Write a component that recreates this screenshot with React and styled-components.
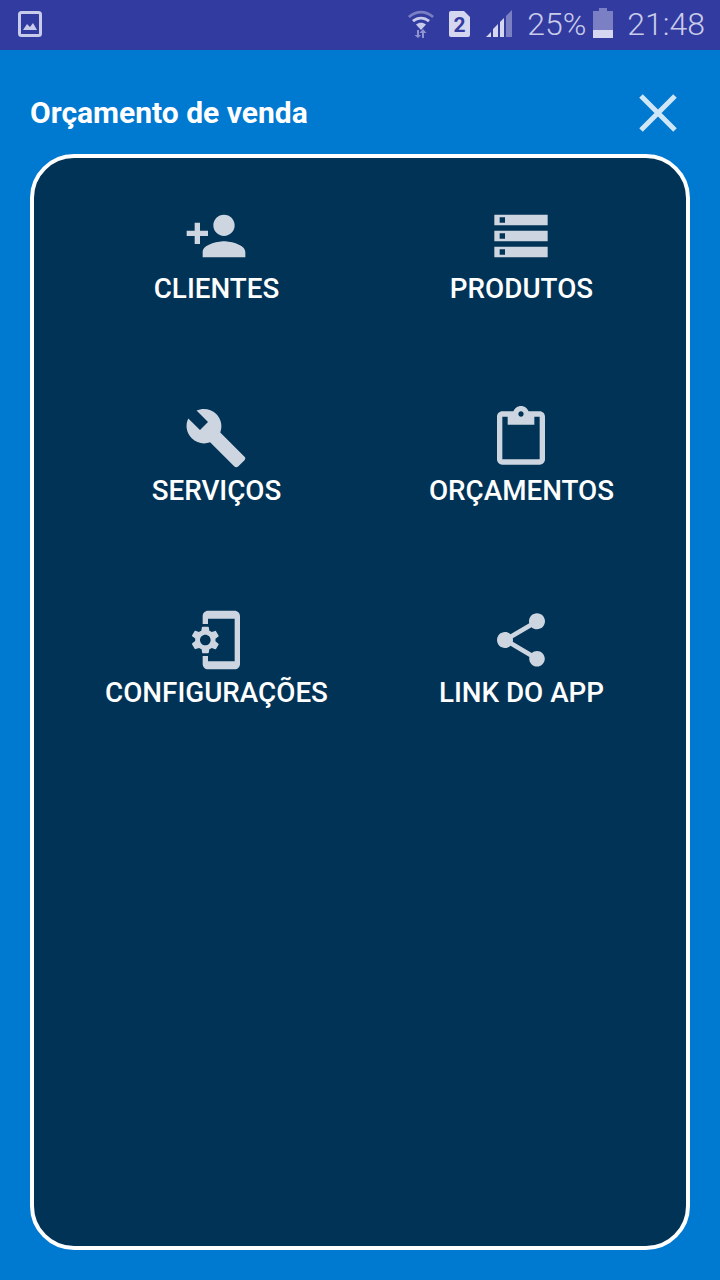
import React from "react";
import styled, { createGlobalStyle } from "styled-components";

const GlobalStyle = createGlobalStyle`
  html, body {
    margin: 0;
    padding: 0;
    background: #0079d1;
  }
  * {
    box-sizing: border-box;
  }
`;

const Screen = styled.div`
  width: 720px;
  height: 1280px;
  display: flex;
  flex-direction: column;
  background: #0079d1;
  font-family: Roboto, "Liberation Sans", sans-serif;
  overflow: hidden;
`;

const StatusBar = styled.div`
  height: 50px;
  flex: none;
  display: flex;
  align-items: center;
  padding: 0 15px 2px 18px;
  background: #323b9f;
  color: #c9cbea;
`;

const StatusRight = styled.div`
  margin-left: auto;
  display: flex;
  align-items: center;
`;

const StatusText = styled.span`
  font-size: 32px;
  font-weight: 300;
  line-height: 48px;
  margin-left: ${(p) => p.$ml || 0}px;
`;

const StatusIcon = styled.svg`
  display: block;
  flex: none;
  margin-left: ${(p) => p.$ml || 0}px;
  margin-bottom: ${(p) => p.$mb || 0}px;
`;

const SimNumber = styled.text`
  font-family: Roboto, "Liberation Sans", sans-serif;
  font-size: 21px;
  font-weight: 700;
  fill: #323b9f;
`;

const Header = styled.div`
  height: 104px;
  flex: none;
  display: flex;
  align-items: center;
  justify-content: space-between;
  padding: 32px 43px 10px 30px;
`;

const Title = styled.h1`
  margin: 0;
  color: #fff;
  font-size: 30px;
  font-weight: 700;
  line-height: 36px;
`;

const CloseIcon = styled.svg`
  display: block;
  color: #cfe6f7;
`;

const Panel = styled.div`
  flex: 1;
  margin: 0 30px 30px;
  border: 4px solid #fff;
  border-radius: 44px;
  background: #013357;
  padding: 46px 12px 0 30px;
`;

const Grid = styled.div`
  display: grid;
  grid-template-columns: 305px 305px;
  grid-auto-rows: 202px;
`;

const Item = styled.div`
  display: flex;
  flex-direction: column;
  align-items: center;
`;

const ItemIcon = styled.svg`
  display: block;
  width: 64px;
  height: 64px;
  margin-right: 2px;
  fill: #cdd6e0;
`;

const ItemLabel = styled.span`
  margin-top: 5px;
  color: #fff;
  font-size: 27.8px;
  font-weight: 500;
  line-height: 32px;
  white-space: nowrap;
`;

const items = [
  {
    label: "CLIENTES",
    d: "M15 12c2.21 0 4-1.79 4-4s-1.79-4-4-4-4 1.79-4 4 1.79 4 4 4zm-9-2V7H4v3H1v2h3v3h2v-3h3v-2H6zm9 4c-2.67 0-8 1.34-8 4v2h16v-2c0-2.66-5.33-4-8-4z",
  },
  {
    label: "PRODUTOS",
    d: "M2 20h20v-4H2v4zm2-3h2v2H4v-2zM2 4v4h20V4H2zm4 3H4V5h2v2zm-4 7h20v-4H2v4zm2-3h2v2H4v-2z",
  },
  {
    label: "SERVIÇOS",
    d: "M22.7 19l-9.1-9.1c.9-2.3.4-5-1.5-6.9-2-2-5-2.4-7.4-1.3L9 6 6 9 1.6 4.7C.4 7.1.9 10.1 2.9 12.1c1.9 1.9 4.6 2.4 6.9 1.5l9.1 9.1c.4.4 1 .4 1.4 0l2.3-2.3c.5-.4.5-1.1.1-1.4z",
  },
  {
    label: "ORÇAMENTOS",
    d: "M19 2h-4.18C14.4.84 13.3 0 12 0c-1.3 0-2.4.84-2.82 2H5c-1.1 0-2 .9-2 2v16c0 1.1.9 2 2 2h14c1.1 0 2-.9 2-2V4c0-1.1-.9-2-2-2zm-7 0c.55 0 1 .45 1 1s-.45 1-1 1-1-.45-1-1 .45-1 1-1zm7 18H5V4h2v3h10V4h2v16z",
  },
  {
    label: "CONFIGURAÇÕES",
    d: "M11.8 12.5v-1l1.1-.8c.1-.1.1-.2.1-.3l-1-1.7c-.1-.1-.2-.2-.3-.1l-1.3.4c-.3-.2-.6-.4-.9-.5l-.2-1.3c0-.1-.1-.2-.3-.2H7c-.1 0-.2.1-.3.2l-.2 1.3c-.3.1-.6.3-.9.5l-1.3-.5c-.1 0-.2 0-.3.1l-1 1.7c-.1.1 0 .2.1.3l1.1.8v1l-1.1.8c-.1.2-.1.3-.1.4l1 1.7c.1.1.2.2.3.1l1.4-.4c.3.2.6.4.9.5l.2 1.3c0 .1.1.2.2.2h2c.1 0 .2-.1.3-.2l.2-1.3c.3-.1.6-.3.9-.5l1.3.5c.1 0 .2 0 .3-.1l1-1.7c.1-.1 0-.2-.1-.3l-1.1-.9zM8 14c-1.1 0-2-.9-2-2s.9-2 2-2 2 .9 2 2-.9 2-2 2zM19 1H9c-1.1 0-2 .9-2 2v3h2V4h10v16H9v-2H7v3c0 1.1.9 2 2 2h10c1.1 0 2-.9 2-2V3c0-1.1-.9-2-2-2z",
  },
  {
    label: "LINK DO APP",
    d: "M18 16.08c-.76 0-1.44.3-1.96.77L8.91 12.7c.05-.23.09-.46.09-.7s-.04-.47-.09-.7l7.05-4.11c.54.5 1.25.81 2.04.81 1.66 0 3-1.34 3-3s-1.34-3-3-3-3 1.34-3 3c0 .24.04.47.09.7L8.04 9.81C7.5 9.31 6.79 9 6 9c-1.66 0-3 1.34-3 3s1.34 3 3 3c.79 0 1.5-.31 2.04-.81l7.12 4.16c-.05.21-.08.43-.08.65 0 1.61 1.31 2.92 2.92 2.92 1.61 0 2.92-1.31 2.92-2.92s-1.31-2.92-2.92-2.92z",
  },
];

function App() {
  return (
    <Screen>
      <GlobalStyle />
      <StatusBar>
        <StatusIcon width="24" height="26" viewBox="0 0 24 26">
          <rect x="1.5" y="1.5" width="21" height="23" rx="2" fill="none" stroke="#c9cbea" strokeWidth="3" />
          <path d="M5 19l4-6 3 3 3-4 4 7z" fill="#c9cbea" />
        </StatusIcon>
        <StatusRight>
          <StatusIcon width="28" height="28" viewBox="0 0 28 28">
            <path d="M1 6C9-1 19-1 27 6l-1.800 2C18.500 2 9.500 2 2.800 8z" fill="#7b7fc4" />
            <path d="M5 10c5.500-4.500 12.500-4.500 18 0l-2 2.200c-4.500-3.500-9.500-3.500-14 0z" fill="#c9cbea" />
            <path d="M9 14.500c3-2.500 7-2.500 10 0L14 20z" fill="#c9cbea" />
            <path d="M10 20v5H7.500l3.500 3 3-3h-2v-5zM17 28v-5h2.500L16 19l-3.500 4H15v5z" fill="#8f93cf" />
          </StatusIcon>
          <StatusIcon $ml={14} width="21" height="26" viewBox="0 0 21 26">
            <path d="M2 0h13l6 6v18a2 2 0 0 1-2 2H2a2 2 0 0 1-2-2V2a2 2 0 0 1 2-2z" fill="#d5d7f0" />
            <SimNumber x="10.500" y="20.500" textAnchor="middle">2</SimNumber>
          </StatusIcon>
          <StatusIcon $ml={16} width="26" height="28" viewBox="0 0 26 28">
            <path d="M0 27l5-5v5zM7 27v-8l5-5v13zM14 27V12l4-4v19z" fill="#d5d7f0" />
            <path d="M20 27V6l6-6v27z" fill="#7b7fc4" />
          </StatusIcon>
          <StatusText $ml={15}>25%</StatusText>
          <StatusIcon $ml={7} $mb={2} width="20" height="30" viewBox="0 0 20 30">
            <path d="M6 0h8v3h6v27H0V3h6z" fill="#7b7fc4" />
            <rect x="0" y="22" width="20" height="8" fill="#d5d7f0" />
          </StatusIcon>
          <StatusText $ml={14}>21:48</StatusText>
        </StatusRight>
      </StatusBar>
      <Header>
        <Title>Orçamento de venda</Title>
        <CloseIcon width="38" height="38" viewBox="0 0 38 38">
          <path d="M2 2l34 34M36 2L2 36" stroke="currentColor" strokeWidth="5" fill="none" />
        </CloseIcon>
      </Header>
      <Panel>
        <Grid>
          {items.map((item) => (
            <Item key={item.label}>
              <ItemIcon viewBox="0 0 24 24">
                <path d={item.d} />
              </ItemIcon>
              <ItemLabel>{item.label}</ItemLabel>
            </Item>
          ))}
        </Grid>
      </Panel>
    </Screen>
  );
}

export default App;
